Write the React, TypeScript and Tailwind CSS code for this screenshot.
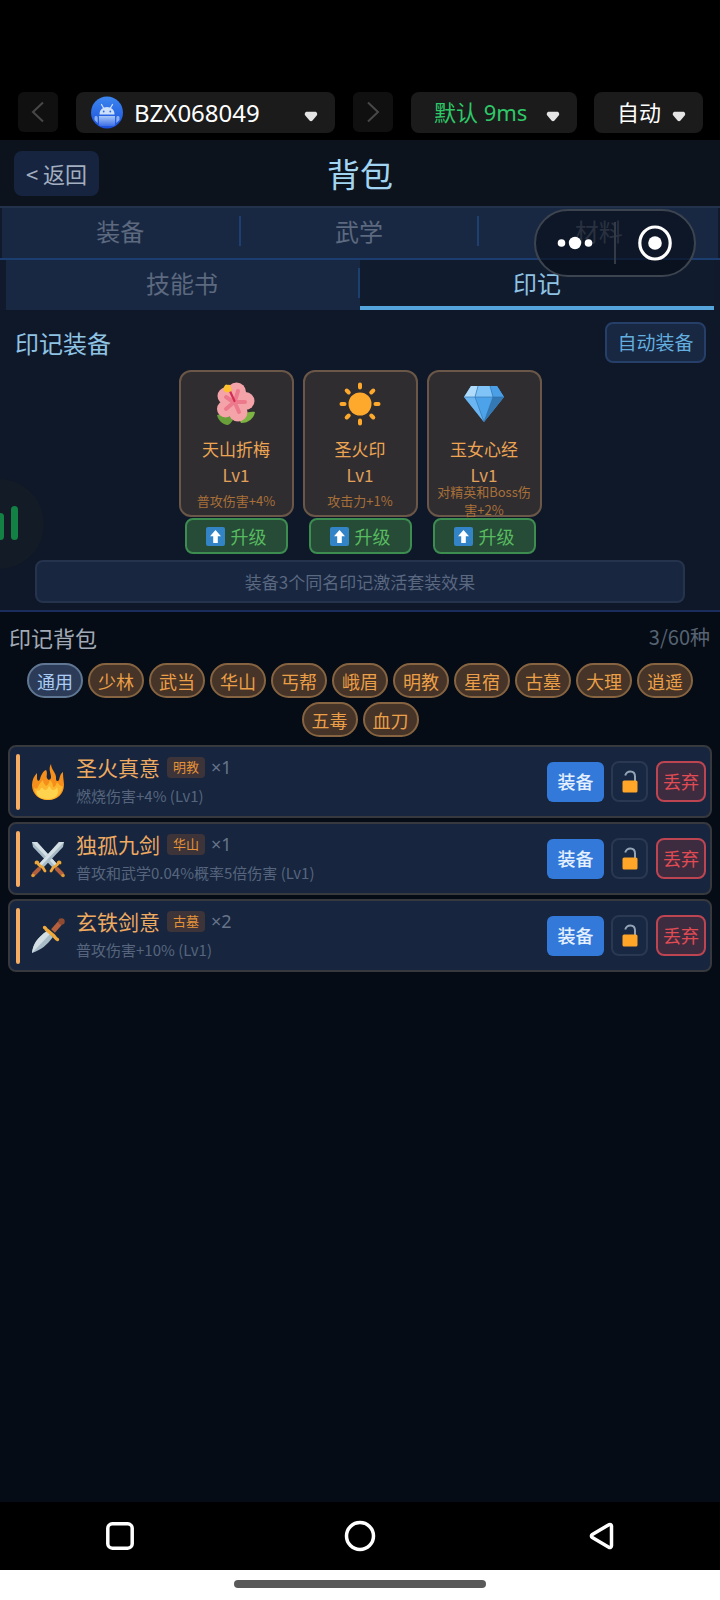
import { useState } from 'react';
import type { ReactNode } from 'react';
import clsx from 'clsx';

const SLOTS = [
  { icon: <HibiscusIcon />, name: '天山折梅', level: 'Lv1', effect: '普攻伤害+4%' },
  { icon: <SunIcon />, name: '圣火印', level: 'Lv1', effect: '攻击力+1%' },
  { icon: <GemIcon />, name: '玉女心经', level: 'Lv1', effect: '对精英和Boss伤害+2%' },
];

const SCHOOLS = [
  '通用', '少林', '武当', '华山', '丐帮', '峨眉', '明教',
  '星宿', '古墓', '大理', '逍遥', '五毒', '血刀',
];

const MARKS = [
  { icon: <FireIcon />, name: '圣火真意', school: '明教', count: 1, desc: '燃烧伤害+4% (Lv1)' },
  { icon: <SwordsIcon />, name: '独孤九剑', school: '华山', count: 1, desc: '普攻和武学0.04%概率5倍伤害 (Lv1)' },
  { icon: <DaggerIcon />, name: '玄铁剑意', school: '古墓', count: 2, desc: '普攻伤害+10% (Lv1)' },
];

export default function App() {
  const [tab, setTab] = useState('印记');
  const [school, setSchool] = useState('通用');

  return (
    <div className="relative flex min-h-screen flex-col overflow-hidden bg-[#060c15] font-['Noto_Sans_CJK_SC',sans-serif]">
      <DeviceBar />

      <header className="grid h-[66px] grid-cols-3 items-center bg-[#0c131d] px-3.5">
        <button className="h-[45px] w-[85px] justify-self-start rounded-lg bg-[#162440] text-[22px] text-[#a3aebf]">
          &lt; 返回
        </button>
        <h1 className="text-center text-[33px] leading-10 text-[#a2d5f2]">背包</h1>
      </header>

      {/* 分类标签 */}
      <nav className="relative bg-[#101a2c]">
        <div className="flex border-y-2 border-t-[#22324b] border-b-[#1c3d70] px-0.5">
          {['装备', '武学', '材料'].map((t) => (
            <Tab key={t} label={t} active={tab === t} onClick={() => setTab(t)} />
          ))}
        </div>
        <div className="flex px-1.5">
          {['技能书', '印记'].map((t) => (
            <Tab key={t} label={t} active={tab === t} onClick={() => setTab(t)} />
          ))}
        </div>
        <Capsule />
      </nav>

      {/* 已装备的印记 */}
      <section className="border-b-2 border-[#1b2d5c] bg-[#0f1828] pt-3 pb-[7px]">
        <div className="flex items-center justify-between pr-3.5 pl-[15px]">
          <h2 className="text-2xl text-[#8fc3e4]">印记装备</h2>
          <button className="h-[41px] w-[101px] rounded-lg border-2 border-[#263f68] bg-[#182742] text-[19px] text-[#63aede]">
            自动装备
          </button>
        </div>
        <div className="mt-[7px] flex justify-center gap-[9px]">
          {SLOTS.map((slot) => (
            <div key={slot.name} className="flex w-[115px] flex-col items-center">
              <div className="flex h-[147px] w-full flex-col items-center rounded-xl border-2 border-[#6b5747] bg-[#302d31] px-2 pt-2">
                <div className="flex h-12 items-center">{slot.icon}</div>
                <p className="mt-2 text-[17px] leading-7 text-[#eda552]">{slot.name}</p>
                <p className="text-[17px] leading-6 text-[#e0a05a]">{slot.level}</p>
                <div className="flex h-7 items-center">
                  <p className="text-center text-[13px] leading-[18px] break-all text-[#a87038]">{slot.effect}</p>
                </div>
              </div>
              <button className="mt-px flex h-9 w-[103px] items-center justify-center gap-1.5 rounded-lg border-2 border-[#3d8c50] bg-[#264c37] text-[18px] text-[#58bb60]">
                <UpIcon />
                升级
              </button>
            </div>
          ))}
        </div>
        <p className="mx-[35px] mt-1.5 h-[43px] rounded-lg border-2 border-[#26334c] bg-[#182640] text-center text-[17px] leading-[39px] text-[#5a6880]">
          装备3个同名印记激活套装效果
        </p>
      </section>

      {/* 印记背包 */}
      <main className="flex-1 px-2 pt-[7px]">
        <div className="flex h-9 items-center justify-between pr-0.5 pl-px">
          <h2 className="text-[22px] text-[#a2aab6]">印记背包</h2>
          <span className="text-[20px] text-[#566373]">3/60种</span>
        </div>
        <div className="mt-2 flex flex-wrap justify-center gap-x-[5px] gap-y-1">
          {SCHOOLS.map((s) => (
            <button
              key={s}
              onClick={() => setSchool(s)}
              className={clsx(
                'h-[35px] w-14 rounded-full border-2 text-[18px] leading-[30px]',
                school === s
                  ? 'border-[#607793] bg-[#2c3c58] text-[#a9cbf4]'
                  : 'border-[#866441] bg-[#453427] text-[#eb9f48]',
              )}
            >
              {s}
            </button>
          ))}
        </div>
        <ul className="mt-2 flex flex-col gap-1">
          {MARKS.map((mark) => (
            <li
              key={mark.name}
              className="flex h-[73px] items-center rounded-lg border-2 border-[#38393f] bg-[#17253f] pr-1 pl-1.5"
            >
              <span className="h-14 w-1 rounded-sm bg-[#f4ad62]" />
              <div className="ml-2.5 flex w-9 justify-center">{mark.icon}</div>
              <div className="ml-2.5 flex-1">
                <div className="flex h-7 items-center">
                  <span className="text-[21px] text-[#eeaa60]">{mark.name}</span>
                  <span className="ml-[7px] h-[21px] w-[38px] rounded bg-[#3c3438] text-center text-[13px] leading-5 text-[#e59238]">
                    {mark.school}
                  </span>
                  <span className="ml-1.5 font-['Noto_Sans',sans-serif] text-[18px] text-[#66748a]">×{mark.count}</span>
                </div>
                <p className="text-[15px] leading-7 text-[#56657d]">{mark.desc}</p>
              </div>
              <button className="h-10 w-[57px] rounded-md bg-[#3279da] text-[18px] font-medium text-[#e6f1ff]">装备</button>
              <button
                aria-label="锁定"
                className="ml-[7px] flex h-[41px] w-[37px] items-center justify-center rounded-lg border-2 border-[#2a3851] bg-[#182742]"
              >
                <LockIcon />
              </button>
              <button className="ml-2 h-[41px] w-[50px] rounded-lg border-2 border-[#bd4552] bg-[#3d2b3f] text-[18px] text-[#e14c54]">
                丢弃
              </button>
            </li>
          ))}
        </ul>
      </main>

      <SystemNav />
      <SignalBall />
    </div>
  );
}

function Tab({ label, active, onClick }: { label: string; active: boolean; onClick: () => void }) {
  return (
    <button
      onClick={onClick}
      className={clsx(
        'group flex h-[50px] flex-1 items-center text-2xl',
        active ? 'border-b-4 border-[#55a4dc] bg-[#101b2e] text-[#8fc3e4]' : 'bg-[#192842] pb-1 text-[#5c697f]',
      )}
    >
      <span className="flex-1">{label}</span>
      <span className="h-[30px] w-0.5 bg-[#1d4070] group-last:hidden" />
    </button>
  );
}

function DeviceBar() {
  return (
    <div className="flex h-[140px] items-start bg-black pt-[92px] pr-[17px] pl-[18px] font-['Noto_Sans','Noto_Sans_CJK_SC',sans-serif]">
      <button aria-label="上一个" className="flex h-10 w-10 items-center justify-center rounded-md bg-[#101010]">
        <svg width="14" height="22" viewBox="0 0 14 22" fill="none" stroke="#484848" strokeWidth="2">
          <path d="M12 1.5 2 11l10 9.500" />
        </svg>
      </button>
      <Picker label="账号" value="BZX068049" className="ml-[18px] flex-1 pr-[17px] pl-[15px]" textClass="ml-[11px] flex-1 text-2xl text-white">
        <AndroidIcon />
      </Picker>
      <button aria-label="下一个" className="ml-[18px] flex h-10 w-10 items-center justify-center rounded-md bg-[#101010]">
        <svg width="14" height="22" viewBox="0 0 14 22" fill="none" stroke="#484848" strokeWidth="2">
          <path d="m2 1.500 10 9.500L2 20.500" />
        </svg>
      </button>
      <Picker label="线路" value="默认 9ms" className="ml-[18px] w-[166px] pr-[17px] pl-[23px]" textClass="flex-1 text-[22px] text-[#2fc868]" />
      <Picker label="画质" value="自动" className="ml-[17px] w-[109px] pr-[17px] pl-[23px]" textClass="flex-1 text-[22px] text-white" />
    </div>
  );
}

type PickerProps = {
  label: string;
  value: string;
  className: string;
  textClass: string;
  children?: ReactNode;
};

function Picker({ label, value, className, textClass, children }: PickerProps) {
  return (
    <label className={clsx('flex h-[41px] items-center rounded-lg bg-[#1b1b1b]', className)}>
      {children}
      <select aria-label={label} className={clsx('min-w-0 appearance-none bg-transparent', textClass)}>
        <option>{value}</option>
      </select>
      <svg width="14" height="11" viewBox="0 0 14 11" className="mt-2 shrink-0">
        <path
          d="M3.200.8h7.600c2 0 3.200 2.200 1.900 3.800L8.500 9.400c-.8 1-2.200 1-3 0L1.300 4.600C0 3 1.200.8 3.200.8z"
          fill="#e4e4e4"
        />
      </svg>
    </label>
  );
}

// 小程序右上角胶囊，浮在标签之上
function Capsule() {
  return (
    <div className="absolute top-[3px] right-6 flex h-[68px] w-[162px] items-center rounded-full border-2 border-[#3c444f] bg-[#060c16]/60">
      <button aria-label="更多" className="flex h-full flex-1 items-center justify-center">
        <svg width="36" height="14" viewBox="0 0 36 14" fill="#fff">
          <circle cx="4.500" cy="7" r="3.800" />
          <circle cx="18" cy="7" r="6.200" />
          <circle cx="31.500" cy="7" r="3.800" />
        </svg>
      </button>
      <span className="h-[42px] w-0.5 bg-[#343b47]" />
      <button aria-label="关闭" className="flex h-full flex-1 items-center justify-center">
        <svg width="36" height="38" viewBox="0 0 36 38">
          <ellipse cx="18" cy="19" rx="15.200" ry="16" fill="none" stroke="#fff" strokeWidth="3.200" />
          <circle cx="18" cy="19" r="6.800" fill="#fff" />
        </svg>
      </button>
    </div>
  );
}

function SignalBall() {
  return (
    <div className="absolute top-[479px] -left-[46px] flex h-[90px] w-[90px] items-center rounded-full bg-[#121b26]">
      <svg width="90" height="90" viewBox="0 0 90 90" fill="#138044">
        <rect x="43" y="34" width="7" height="27" rx="3.500" />
        <rect x="57" y="27" width="7" height="34" rx="3.500" />
      </svg>
    </div>
  );
}

function SystemNav() {
  return (
    <footer>
      <div className="flex h-[68px] items-center bg-black">
        <button aria-label="最近任务" className="flex flex-1 justify-center">
          <svg width="32" height="32" viewBox="0 0 32 32" fill="none" stroke="#fff" strokeWidth="3.500">
            <rect x="3.800" y="3.800" width="24.400" height="24.400" rx="4.500" />
          </svg>
        </button>
        <button aria-label="主页" className="flex flex-1 justify-center">
          <svg width="32" height="32" viewBox="0 0 32 32" fill="none" stroke="#fff" strokeWidth="3.500">
            <circle cx="16" cy="16" r="13.500" />
          </svg>
        </button>
        <button aria-label="返回" className="flex flex-1 justify-center">
          <svg width="32" height="32" viewBox="0 0 32 32" fill="none" stroke="#fff" strokeWidth="3.500" strokeLinejoin="round">
            <path d="M27.500 6.200v19.600c0 1.400-1.500 2.200-2.700 1.400L8.300 17.600c-1.200-.8-1.200-2.400 0-3.200L24.800 4.800c1.200-.8 2.700 0 2.700 1.400z" />
          </svg>
        </button>
      </div>
      <div className="flex h-[30px] justify-center bg-white pt-2.5">
        <span className="h-2 w-[252px] rounded-full bg-[#595959]" />
      </div>
    </footer>
  );
}

function AndroidIcon() {
  return (
    <svg width="32" height="33" viewBox="0 0 32 33" className="shrink-0">
      <defs>
        <linearGradient id="droidBg" x1="0" y1="0" x2="0" y2="1">
          <stop offset="0" stopColor="#3c86ef" />
          <stop offset="1" stopColor="#1c50dc" />
        </linearGradient>
        <linearGradient id="droidBody" x1="0" y1="0" x2="0" y2="1">
          <stop offset="0" stopColor="#a9c8f8" />
          <stop offset="1" stopColor="#3e70e6" />
        </linearGradient>
      </defs>
      <circle cx="16" cy="16.500" r="16" fill="url(#droidBg)" />
      <path d="M8.500 18.500C8.500 13.800 11.800 11 16 11s7.500 2.800 7.500 7.500z" fill="#cfe0fb" />
      <path d="m10.500 8.500 2.300 4M21.500 8.500l-2.300 4" stroke="#cfe0fb" strokeWidth="1.200" strokeLinecap="round" />
      <circle cx="12.700" cy="15.500" r=".9" fill="#2c6be4" />
      <circle cx="19.300" cy="15.500" r=".9" fill="#2c6be4" />
      <path d="M8 20h16v8.500c0 .8-.7 1.500-1.500 1.500h-13c-.8 0-1.500-.7-1.500-1.500z" fill="url(#droidBody)" />
      <path d="M3.500 21.500c0-1 .7-1.500 1.500-1.500s1.700.5 1.700 1.500V27l-3.200-3zM25.300 21.500c0-1 .8-1.500 1.700-1.500s1.500.5 1.500 1.500V24l-3.200 3z" fill="#86aff4" />
    </svg>
  );
}

function UpIcon() {
  return (
    <svg width="19" height="19" viewBox="0 0 19 19">
      <rect width="19" height="19" rx="2" fill="#3384c6" />
      <path d="M9.500 3 15 9.300h-3.200V16H7.200V9.300H4z" fill="#fff" />
    </svg>
  );
}

function HibiscusIcon() {
  return (
    <svg width="42" height="44" viewBox="0 0 42 44">
      <path d="M2 33c6-2 13 0 16 5-2 3-4 5-6 5-5-1-9-5-10-10z" fill="#689f38" />
      <path d="M40 30c-1 6-6 11-14 11l-2-4c2-5 9-8 16-7z" fill="#7cb342" />
      <g fill="#f4a3a8">
        <circle cx="21.500" cy="10" r="9.500" />
        <circle cx="11" cy="14" r="8.500" />
        <circle cx="10.500" cy="27" r="8.500" />
        <circle cx="23" cy="30" r="9.500" />
        <circle cx="30.500" cy="19" r="9" />
      </g>
      <g stroke="#ec7a8c" strokeWidth="4" strokeLinecap="round">
        <path d="m20 19 3-10M20 20h10M20 21l4 9M18 21l-7 6M17 19l-6-4" />
      </g>
      <path d="m13.500 6 6 13" stroke="#d52c55" strokeWidth="2.200" strokeLinecap="round" />
      <path d="M9 5c1-3 3-3 4-2 2-1 3 1 3 3 1 2 0 4-2 4-2 1-5 0-5-2-1 0-1-2 0-3z" fill="#fdc02f" />
    </svg>
  );
}

function SunIcon() {
  return (
    <svg width="42" height="44" viewBox="0 0 42 44">
      <circle cx="21" cy="22" r="11.500" fill="#ffa92c" />
      <g stroke="#ffa92c" strokeWidth="4" strokeLinecap="round">
        <path d="M21 2.500v3M21 38.500v3M2.500 22h3M36.500 22h3M7.700 8.500l2 2M32.300 33.500l2 2M34.300 8.500l-2 2M9.700 33.500l-2 2" />
      </g>
    </svg>
  );
}

function GemIcon() {
  return (
    <svg width="42" height="44" viewBox="0 0 42 44" strokeLinejoin="round">
      <path d="M8 4h26l7 11-20 25L1 15z" fill="#4da3ea" />
      <path d="M8 4h7l-3 11H1z" fill="#b0dbfa" />
      <path d="M15 4h12l3 11H12z" fill="#80c3f7" />
      <path d="M27 4h7l7 11H30z" fill="#4b9fe6" />
      <path d="M1 15h11l9 25z" fill="#6bb5f2" />
      <path d="M30 15h11L21 40z" fill="#3478b4" />
      <path d="M1 15h40M15 4l-3 11 9 25 9-25-3-11" fill="none" stroke="#2e6ea8" strokeWidth=".6" />
    </svg>
  );
}

function FireIcon() {
  return (
    <svg width="34" height="38" viewBox="0 0 34 38">
      <path
        d="M20 1c-3 5 0 9 0 13 0 3-3 4-4 1-1-2 1-5-1-8-3 1-5 5-6 9-1 3-3 2-3-1V10C3 13 1 17 1 22c0 9 7 15 16 15s16-6 16-15c0-4-1-7-1-13-3 2-3 5-4 8-1 2-3 1-3-1 1-6-5-9-5-15z"
        fill="#f58e1b"
      />
      <path
        d="M3 24c1 2 3 2 4 0 1-3 3-5 5-7 0 3 2 4 3 6 2-1 3-3 4-6 2 2 3 4 3 7 2 0 3-2 4-5 2 2 3 5 6 4-1 8-7 14-15 14S3 32 3 24z"
        fill="#fcb52d"
      />
      <path
        d="M6 27c2 2 3 0 4-2 2-1 2 2 4 2s3-2 4-4c2 1 2 4 4 4s3-1 4-3c3 7-1 12-9 12S4 32 6 27z"
        fill="#ffd34e"
      />
    </svg>
  );
}

function SwordsIcon() {
  return (
    <svg width="34" height="38" viewBox="0 0 34 38">
      <Sword />
      <g transform="matrix(-1 0 0 1 34 0)">
        <Sword />
      </g>
    </svg>
  );
}

function Sword() {
  return (
    <>
      <path d="M1 2h5l20 22-4 4L2 7z" fill="#a9bdc8" />
      <path d="M1 2h5l20 22-2 2z" fill="#d3dfe5" />
      <path d="m26 29 5 5" stroke="#b4603c" strokeWidth="4" strokeLinecap="round" />
      <path d="M20 31c1-1 1-3 3-4s4-2 4-4c0-1 2-2 2 0" fill="none" stroke="#eda63a" strokeWidth="2.800" strokeLinecap="round" />
      <circle cx="32" cy="35.500" r="1.800" fill="#e09a35" />
    </>
  );
}

function DaggerIcon() {
  return (
    <svg width="34" height="38" viewBox="0 0 34 38">
      <path d="M1 36c1-9 5-15 15-22l6 6c-6 8-12 13-21 16z" fill="#a9bdc8" />
      <path d="M1 36c1-9 5-15 15-22l3 3z" fill="#d3dfe5" />
      <path d="m22 14 7-8" stroke="#b4603c" strokeWidth="5" />
      <circle cx="30.500" cy="4.500" r="3.200" fill="#8f4a32" />
      <path d="M13.500 10.500c1 0 1 2 3 3l6 5c2 2 2 3 4 4" fill="none" stroke="#f0a93a" strokeWidth="3.400" strokeLinecap="round" />
    </svg>
  );
}

function LockIcon() {
  return (
    <svg width="16" height="23" viewBox="0 0 16 23">
      <path d="M3.200 5.500C4 3 5.800 1.500 8.400 1.500c3 0 4.600 2 4.600 5V11" fill="none" stroke="#93a5b5" strokeWidth="2" />
      <rect x=".5" y="10.500" width="15" height="12" rx="1.600" fill="#ffa629" />
    </svg>
  );
}
